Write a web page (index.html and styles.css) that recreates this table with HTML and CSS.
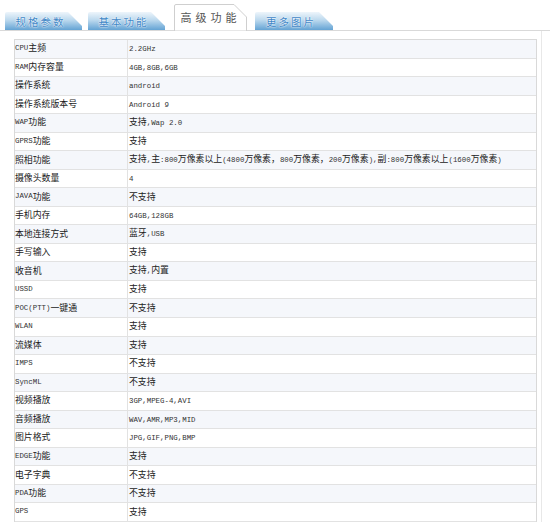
FILE: index.html
```html
<!DOCTYPE html>
<html lang="zh-CN">
<head>
<meta charset="utf-8">
<title>高级功能</title>
<link rel="stylesheet" href="styles.css">
</head>
<body>
<div class="page">
  <nav class="tabs">
    <a class="tab">
      <svg class="tab-bg" width="77" height="18" viewBox="0 0 77 18"><defs><linearGradient id="tg" x1="0" y1="0" x2="0" y2="1"><stop offset="0" stop-color="#eef5fb"/><stop offset="0.45" stop-color="#bcd9ee"/><stop offset="1" stop-color="#64a3d4"/></linearGradient></defs><path d="M0 18V2Q0 0 2 0H63L77 14V18Z" fill="url(#tg)"/></svg>
      <span class="tab-label">规格参数</span>
    </a>
    <a class="tab tab-2">
      <svg class="tab-bg" width="77" height="18" viewBox="0 0 77 18"><path d="M0 18V2Q0 0 2 0H63L77 14V18Z" fill="url(#tg)"/></svg>
      <span class="tab-label">基本功能</span>
    </a>
    <a class="tab tab-active">
      <svg class="tab-bg" width="73" height="27" viewBox="0 0 73 27"><path d="M0.5 27V2Q0.5 0.5 2 0.5H60L72.5 13V27Z" fill="#fff" stroke="#cfcfcf"/></svg>
      <span class="tab-label">高级功能</span>
    </a>
    <a class="tab tab-4">
      <svg class="tab-bg" width="78" height="18" viewBox="0 0 78 18"><path d="M0 18V2Q0 0 2 0H64L78 14V18Z" fill="url(#tg)"/></svg>
      <span class="tab-label">更多图片</span>
    </a>
  </nav>
  <div class="content">
    <div class="spec">
      <div class="row"><div class="k"><span class="en">CPU</span>主频</div><div class="v"><span class="en">2.2GHz</span></div></div>
      <div class="row"><div class="k"><span class="en">RAM</span>内存容量</div><div class="v"><span class="en">4GB,8GB,6GB</span></div></div>
      <div class="row"><div class="k">操作系统</div><div class="v"><span class="en">android</span></div></div>
      <div class="row"><div class="k">操作系统版本号</div><div class="v"><span class="en">Android 9</span></div></div>
      <div class="row"><div class="k"><span class="en">WAP</span>功能</div><div class="v">支持<span class="en">,Wap 2.0</span></div></div>
      <div class="row"><div class="k"><span class="en">GPRS</span>功能</div><div class="v">支持</div></div>
      <div class="row"><div class="k">照相功能</div><div class="v">支持<span class="en">,</span>主<span class="en">:800</span>万像素以上<span class="en">(4800</span>万像素，<span class="en">800</span>万像素，<span class="en">200</span>万像素<span class="en">),</span>副<span class="en">:800</span>万像素以上<span class="en">(1600</span>万像素<span class="en">)</span></div></div>
      <div class="row"><div class="k">摄像头数量</div><div class="v"><span class="en">4</span></div></div>
      <div class="row"><div class="k"><span class="en">JAVA</span>功能</div><div class="v">不支持</div></div>
      <div class="row"><div class="k">手机内存</div><div class="v"><span class="en">64GB,128GB</span></div></div>
      <div class="row"><div class="k">本地连接方式</div><div class="v">蓝牙<span class="en">,USB</span></div></div>
      <div class="row"><div class="k">手写输入</div><div class="v">支持</div></div>
      <div class="row"><div class="k">收音机</div><div class="v">支持<span class="en">,</span>内置</div></div>
      <div class="row"><div class="k"><span class="en">USSD</span></div><div class="v">支持</div></div>
      <div class="row"><div class="k"><span class="en">POC(PTT)</span>一键通</div><div class="v">不支持</div></div>
      <div class="row"><div class="k"><span class="en">WLAN</span></div><div class="v">支持</div></div>
      <div class="row"><div class="k">流媒体</div><div class="v">支持</div></div>
      <div class="row"><div class="k"><span class="en">IMPS</span></div><div class="v">不支持</div></div>
      <div class="row"><div class="k"><span class="en">SyncML</span></div><div class="v">不支持</div></div>
      <div class="row"><div class="k">视频播放</div><div class="v"><span class="en">3GP,MPEG-4,AVI</span></div></div>
      <div class="row"><div class="k">音频播放</div><div class="v"><span class="en">WAV,AMR,MP3,MID</span></div></div>
      <div class="row"><div class="k">图片格式</div><div class="v"><span class="en">JPG,GIF,PNG,BMP</span></div></div>
      <div class="row"><div class="k"><span class="en">EDGE</span>功能</div><div class="v">支持</div></div>
      <div class="row"><div class="k">电子字典</div><div class="v">不支持</div></div>
      <div class="row"><div class="k"><span class="en">PDA</span>功能</div><div class="v">不支持</div></div>
      <div class="row"><div class="k"><span class="en">GPS</span></div><div class="v">支持</div></div>
    </div>
  </div>
</div>
</body>
</html>
```
FILE: styles.css
```css
html, body {
  margin: 0;
  padding: 0;
  background: #ffffff;
}

.page {
  width: 550px;
  font-family: "Noto Sans CJK SC", "Noto Sans", sans-serif;
  color: #222;
}

.tabs {
  display: flex;
  align-items: flex-end;
  height: 30px;
  padding-left: 5px;
  border-bottom: 1px solid #d9d9d9;
}

.tab {
  position: relative;
  display: flex;
  align-items: center;
  justify-content: center;
  width: 77px;
  height: 18px;
  text-decoration: none;
}

.tab-bg {
  position: absolute;
  left: 0;
  top: 0;
  display: block;
}

.tab-label {
  position: relative;
  font-size: 10.5px;
  letter-spacing: 2px;
  color: #3f86c6;
  text-shadow: 0 0 2px #ffffff, 0 0 1px #ffffff;
  margin-right: 6px;
  margin-top: 1px;
}

.tab-2 {
  margin-left: 6px;
}

.tab-active {
  width: 73px;
  height: 27px;
  margin-left: 9px;
  margin-bottom: -1px;
}

.tab-active .tab-label {
  font-size: 11px;
  letter-spacing: 4px;
  color: #555;
  text-shadow: none;
  margin-right: 0;
  margin-top: -2px;
}

.tab-4 {
  width: 78px;
  margin-left: 8px;
}

.content {
  width: 527px;
  padding: 8px 0 0 14px;
  border-right: 1px solid #e8e8e8;
  height: 491px;
}

.spec {
  width: 523px;
  box-sizing: border-box;
  border: 1px solid #d9d9d9;
  border-bottom: none;
}

.row {
  display: flex;
  align-items: center;
  height: 18.54px;
  box-sizing: border-box;
  border-bottom: 1px solid #e2e2e2;
  font-size: 8.9px;
  line-height: 1;
}

.row:nth-child(odd) {
  background: #f5f7fb;
}

.k {
  width: 112px;
  height: 100%;
  display: flex;
  align-items: center;
  border-right: 1px solid #e2e2e2;
  color: #1a1a1a;
  white-space: nowrap;
}

.v {
  flex: 1;
  padding-left: 1px;
  color: #222;
  white-space: nowrap;
}

.en {
  font-family: "Liberation Mono", monospace;
  font-size: 7.4px;
  color: #333;
}
```
